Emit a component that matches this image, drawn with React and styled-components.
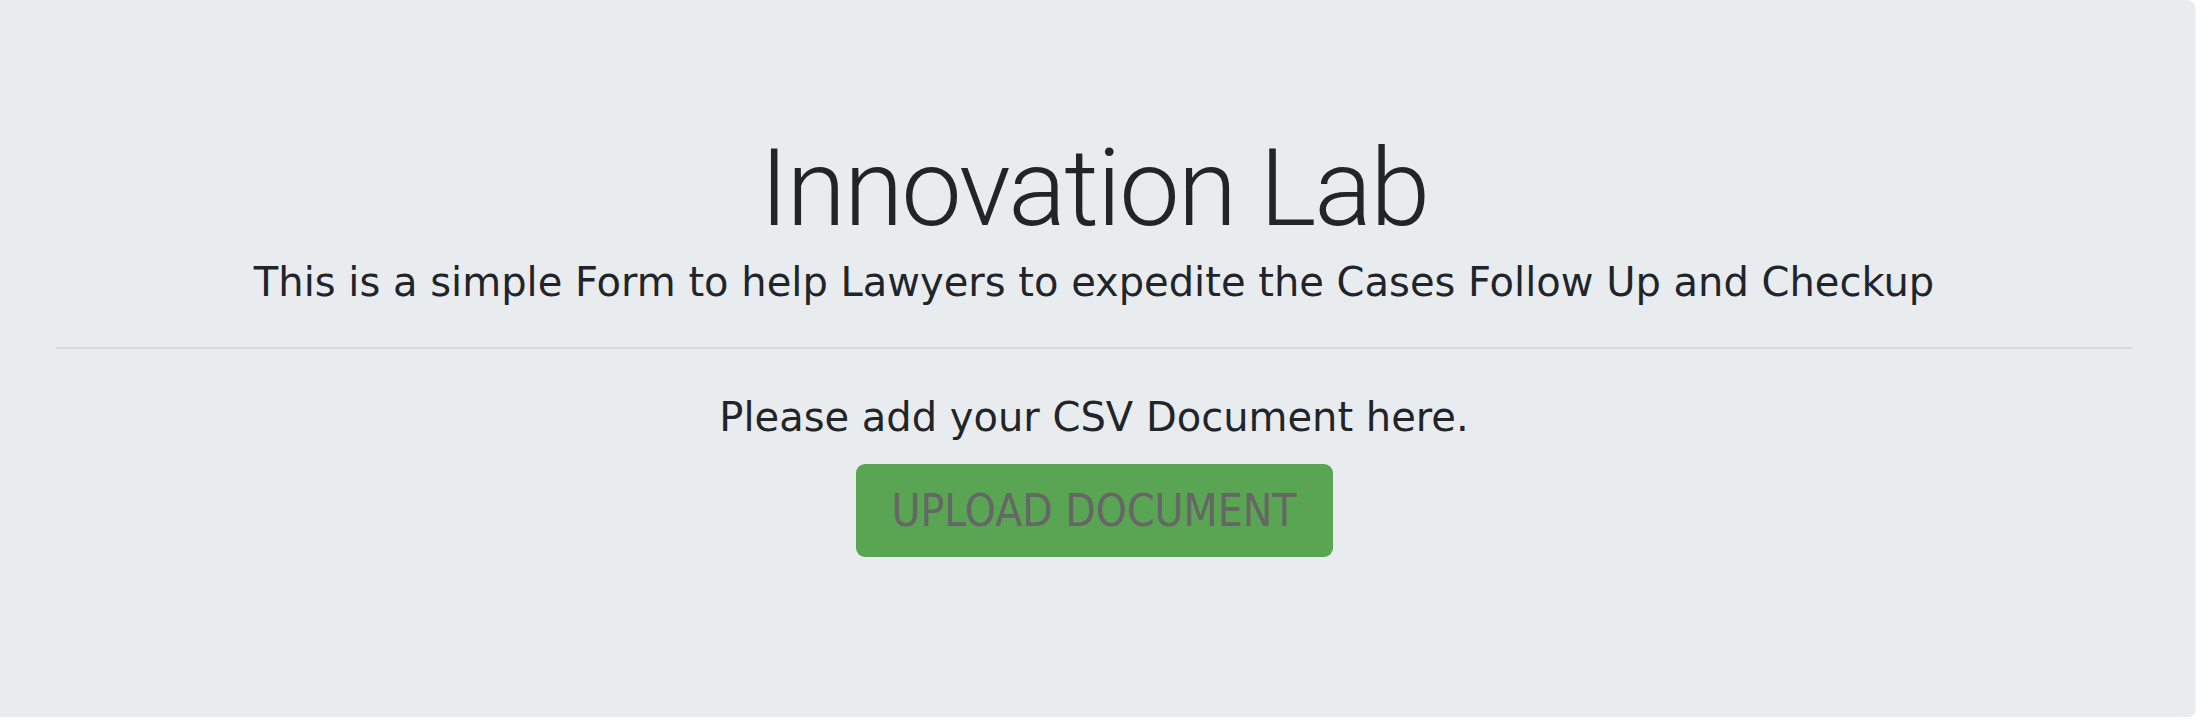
import React from 'react'
import styled, { createGlobalStyle } from 'styled-components'

const GlobalStyle = createGlobalStyle`
  html, body {
    margin: 0;
    padding: 0;
    background: #ffffff;
    overflow: hidden;
  }
`

const Jumbotron = styled.div`
  box-sizing: border-box;
  margin: 0 5px 0 -7px;
  width: 2202px;
  height: 717px;
  padding: 0 63px;
  background: #e9ecef;
  border-radius: 8px;
  box-shadow: 0 1px 3px rgba(0, 0, 0, 0.08);
  display: flex;
  flex-direction: column;
  align-items: center;
  color: #212529;
  font-family: 'DejaVu Sans', Verdana, sans-serif;
`

const Title = styled.h1`
  margin: 122px 0 0;
  font-family: Roboto, 'Helvetica Neue', Arial, sans-serif;
  font-weight: 300;
  font-size: 108px;
  line-height: 132px;
  letter-spacing: -2px;
`

const Lead = styled.p`
  margin: 4px 0 0;
  font-size: 40px;
  line-height: 48px;
`

const Divider = styled.hr`
  align-self: stretch;
  margin: 41px 0 0;
  border: 0;
  border-top: 2px solid #d6d9dc;
`

const Prompt = styled.p`
  margin: 44px 0 0;
  font-size: 40px;
  line-height: 48px;
`

const UploadButton = styled.button`
  margin-top: 23px;
  width: 477px;
  height: 93px;
  border: 0;
  border-radius: 9px;
  background: #59a553;
  color: #666666;
  font-family: 'DejaVu Sans', Verdana, sans-serif;
  font-stretch: condensed;
  font-size: 44px;
  cursor: pointer;
`

export default function App() {
  return (
    <>
      <GlobalStyle />
      <Jumbotron>
        <Title>Innovation Lab</Title>
        <Lead>This is a simple Form to help Lawyers to expedite the Cases Follow Up and Checkup</Lead>
        <Divider />
        <Prompt>Please add your CSV Document here.</Prompt>
        <UploadButton>UPLOAD DOCUMENT</UploadButton>
      </Jumbotron>
    </>
  )
}
